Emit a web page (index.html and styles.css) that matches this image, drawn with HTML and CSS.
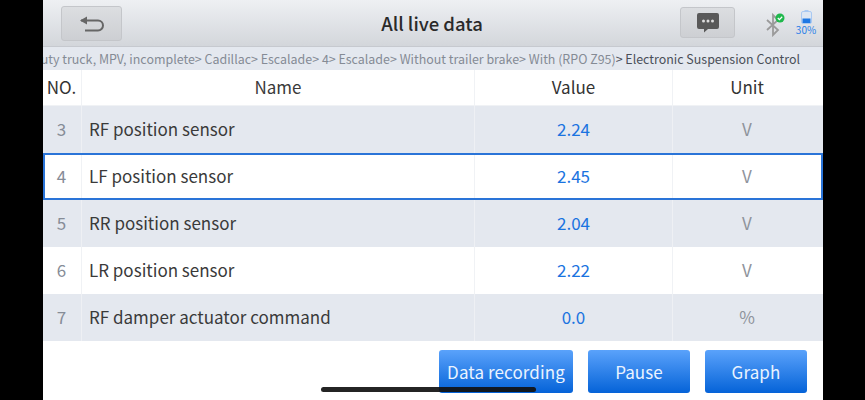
FILE: index.html
```html
<!DOCTYPE html>
<html lang="en">
<head>
<meta charset="utf-8">
<title>All live data</title>
<link rel="stylesheet" href="styles.css">
</head>
<body>
<div class="app">
  <header class="topbar">
    <button class="tool back" type="button" aria-label="Back">
      <svg width="26" height="18" viewBox="0 0 26 18"><path d="M2 5.500h17a5 5 0 0 1 0 10H6" fill="none" stroke="#666" stroke-width="2"/><path d="M1 5.500 8 1.500v8z" fill="#666"/></svg>
    </button>
    <h1 class="title">All live data</h1>
    <button class="tool chat" type="button" aria-label="Messages">
      <svg width="22" height="20" viewBox="0 0 22 20"><path d="M2 0h18a2 2 0 0 1 2 2v12a2 2 0 0 1-2 2H11l-4 3.500V16H2a2 2 0 0 1-2-2V2a2 2 0 0 1 2-2z" fill="#595959"/><circle cx="6.500" cy="8" r="1.500" fill="#ddd"/><circle cx="11" cy="8" r="1.500" fill="#ddd"/><circle cx="15.500" cy="8" r="1.500" fill="#ddd"/></svg>
    </button>
    <div class="bt">
      <svg width="22" height="24" viewBox="0 0 22 24"><path d="M2 7l11 10-5 5V2l5 5L2 17" fill="none" stroke="#9a9a9a" stroke-width="1.800"/><circle cx="15" cy="5" r="4.500" fill="#1fb84c"/><path d="M12.800 5l1.600 1.600 2.800-2.800" fill="none" stroke="#fff" stroke-width="1.300"/></svg>
    </div>
    <div class="battery">
      <svg width="11" height="14" viewBox="0 0 11 14"><rect x="3.500" y="0" width="4" height="2" fill="#a9c9f2"/><rect x="0.500" y="1.500" width="10" height="12" rx="1.500" fill="#dce6f3" stroke="#a9c9f2"/><rect x="1.500" y="8.500" width="8" height="4.500" fill="#1e78e4"/></svg>
      <span class="pct">30%</span>
    </div>
  </header>
  <div class="crumbs"><span class="path">Light duty truck, MPV, incomplete&gt; Cadillac&gt; Escalade&gt; 4&gt; Escalade&gt; Without trailer brake&gt; With (RPO Z95)</span><span class="current">&gt; Electronic Suspension Control</span></div>
  <div class="table">
    <div class="row head"><div class="c no">NO.</div><div class="c name center">Name</div><div class="c val">Value</div><div class="c unit">Unit</div></div>
    <div class="row odd"><div class="c no">3</div><div class="c name">RF position sensor</div><div class="c val">2.24</div><div class="c unit">V</div></div>
    <div class="row sel"><div class="c no">4</div><div class="c name">LF position sensor</div><div class="c val">2.45</div><div class="c unit">V</div></div>
    <div class="row odd"><div class="c no">5</div><div class="c name">RR position sensor</div><div class="c val">2.04</div><div class="c unit">V</div></div>
    <div class="row"><div class="c no">6</div><div class="c name">LR position sensor</div><div class="c val">2.22</div><div class="c unit">V</div></div>
    <div class="row odd"><div class="c no">7</div><div class="c name">RF damper actuator command</div><div class="c val">0.0</div><div class="c unit">%</div></div>
  </div>
  <footer class="actions">
    <button class="btn wide" type="button">Data recording</button>
    <button class="btn" type="button">Pause</button>
    <button class="btn" type="button">Graph</button>
  </footer>
</div>
<div class="home"></div>
</body>
</html>
```
FILE: styles.css
```css
* { box-sizing: border-box; }
html, body { margin: 0; height: 100%; }
body {
  background: #000;
  overflow: hidden;
  font-family: "Noto Sans CJK SC", "Noto Sans", sans-serif;
  position: relative;
}
.app {
  width: 780px;
  height: 400px;
  margin-left: 43px;
  background: #fff;
  display: flex;
  flex-direction: column;
}
.topbar {
  height: 47px;
  flex: none;
  display: flex;
  align-items: flex-start;
  background: linear-gradient(#eef0f3, #d3d6db);
  border-bottom: 1px solid #c6c9cf;
}
.tool {
  padding: 0;
  display: flex;
  align-items: center;
  justify-content: center;
  border: 1px solid #c4c6ca;
  border-radius: 3px;
  background: linear-gradient(#dcdee1, #cdcfd3);
}
.back { width: 61px; height: 35px; margin: 6px 0 0 18px; }
.chat { width: 55px; height: 31px; margin: 7px 0 0 0; }
.title {
  flex: 1;
  margin: 0;
  padding: 0 0 0 62px;
  text-align: center;
  font-size: 18.500px;
  line-height: 47px;
  font-weight: 500;
  color: #2a2a2a;
}
.bt { width: 22px; margin: 13px 0 0 30px; }
.battery {
  width: 24px;
  margin: 10px 5px 0 7px;
  display: flex;
  flex-direction: column;
  align-items: center;
}
.pct { font-size: 10px; line-height: 12px; color: #2a7fe8; }
.crumbs {
  height: 23px;
  flex: none;
  display: flex;
  justify-content: flex-end;
  overflow: hidden;
  padding-right: 23px;
  background: #e4e8ef;
  font-size: 12.450px;
  line-height: 24px;
  white-space: nowrap;
}
.path { flex: none; color: #858b95; }
.current { flex: none; color: #4a4f58; }
.table { flex: none; }
.row {
  display: grid;
  grid-template-columns: 38px 393px 198px 151px;
  height: 47px;
  background: #fff;
  font-size: 17px;
}
.row.head { height: 36px; color: #333; border-bottom: 1px solid #f0f2f5; }
.row.head .c { padding-bottom: 3px; }
.row.odd { background: #e4e8ef; }
.row.sel { outline: 2px solid #2a74d8; outline-offset: -2px; }
.c {
  display: flex;
  align-items: center;
  justify-content: center;
  border-left: 1px solid #f0f2f5;
  padding-bottom: 2px;
}
.odd .c { border-left-color: #eef0f4; }
.c:first-child { border-left: 0; padding-right: 1px; }
.no { color: #868c97; }
.head .no { color: #333; }
.name { justify-content: flex-start; padding-left: 7px; color: #3a3a3a; }
.name.center { justify-content: center; padding-left: 0; }
.val { color: #1a73e0; }
.head .val { color: #333; }
.unit { color: #8f949c; padding-right: 2px; }
.head .unit { color: #333; }
.actions {
  flex: 1;
  display: flex;
  justify-content: flex-end;
  gap: 15px;
  padding: 9px 16px 7px 0;
}
.btn {
  width: 102px;
  padding: 0;
  border: 0;
  border-radius: 3px;
  background: linear-gradient(#5aa2fb, #0563d8);
  color: #eaf3ff;
  font: inherit;
  font-size: 17px;
  letter-spacing: 0.1px;
}
.btn.wide { width: 134px; }
.home {
  position: absolute;
  left: 321px;
  top: 387px;
  width: 215px;
  height: 5px;
  border-radius: 3px;
  background: #111;
  opacity: 0.92;
}
```
